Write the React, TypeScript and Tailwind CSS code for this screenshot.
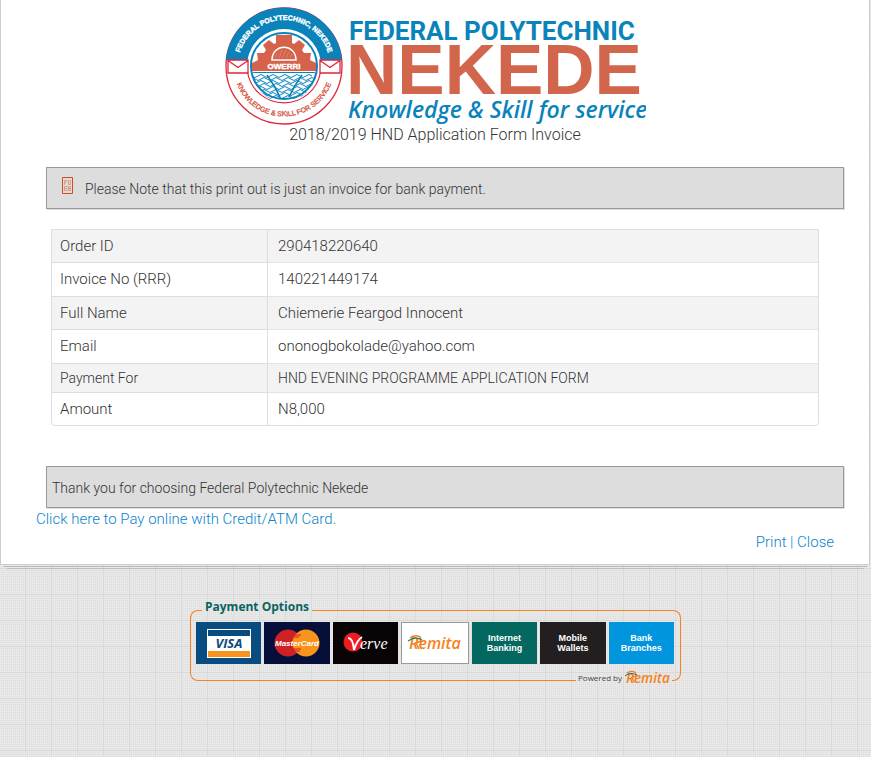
import React from "react";

const rows = [
  { label: "Order ID", value: "290418220640", cell: "h-[33px] text-[15px]" },
  { label: "Invoice No (RRR)", value: "140221449174", cell: "h-[34px] text-[15px]" },
  { label: "Full Name", value: "Chiemerie Feargod Innocent", cell: "h-[33px] text-[15px]" },
  { label: "Email", value: "ononogbokolade@yahoo.com", cell: "h-[34px] text-[15px]" },
  { label: "Payment For", value: "HND EVENING PROGRAMME APPLICATION FORM", cell: "h-[29px] text-[14px]" },
  { label: "Amount", value: "N8,000", cell: "h-[32px] text-[15px]" },
];

const waves = [69, 72, 75, 78, 81, 84, 87, 90];

function Crest() {
  return (
    <svg viewBox="0 0 118 118" className="h-[118px] w-[118px] shrink-0" role="img" aria-label="Federal Polytechnic Nekede crest">
      <defs>
        <path id="crest-top" d="M13 59a46 46 0 0 1 92 0" />
        <path id="crest-bottom" d="M8.500 59a50.500 50.500 0 0 0 101 0" />
        <clipPath id="crest-sea">
          <path d="M28 64h62a31 31 0 0 1-62 0z" />
        </clipPath>
      </defs>
      <circle cx="59" cy="59" r="58" fill="#fff" stroke="#e0243b" strokeWidth="1.3" />
      <path d="M.8 53A58.500 58.500 0 0 1 117.200 53H95.500A37 37 0 0 0 22.500 53z" fill="#0a83bb" />
      <path d="M22.500 65a37 37 0 0 0 73 0" fill="none" stroke="#e0243b" strokeWidth="1.2" />
      <circle cx="59" cy="59" r="33" fill="#fff" stroke="#0a83bb" strokeWidth="2" />
      <path d="M27 64V56L33 53 32 46H39L41 43 38 38 44 33 49 37 51 36V28H67V36L69 37 74 33 80 38 77 43 79 46H86L85 53 91 56V64Z" fill="#d5634b" />
      <path d="M47 53c0-17 24-17 24 0z" fill="none" stroke="#fff" strokeWidth="1.5" />
      <path d="M50 51l2-5m2 5l3-8m0 8l4-8m0 8l3-6m1 6l2-4" stroke="#e59583" strokeWidth="0.600" />
      <g clipPath="url(#crest-sea)" fill="none" stroke="#0a83bb" strokeWidth="1">
        <path d="M27 65.500h64" />
        <path d="M42 68q8 11 13 22M77 68q-8 11-13 22" strokeWidth="1.600" />
        {waves.map((y, i) => (
          <path key={y} d={i % 2 ? "M24 0q3-3 6 0t6 0 6 0 6 0 6 0 6 0 6 0 6 0 6 0 6 0 6 0" : "M21 0q3-3 6 0t6 0 6 0 6 0 6 0 6 0 6 0 6 0 6 0 6 0 6 0"} transform={`translate(0 ${y})`} />
        ))}
      </g>
      <text x="59" y="62" textAnchor="middle" className="font-['Liberation_Sans',sans-serif] text-[8px] font-bold" fill="#fff" stroke="#fff" strokeWidth="0.400">OWERRI</text>
      <g fill="#fff" stroke="#e0243b" strokeWidth="1.300">
        <path d="M3 53h20v13H3zM3 53.500l10 7 10-7M95 53h20v13H95zM95 53.500l10 7 10-7" />
      </g>
      <text className="font-['Liberation_Sans',sans-serif] text-[7px] font-bold" fill="#fff" stroke="#fff" strokeWidth="0.400">
        <textPath href="#crest-top" startOffset="50%" textAnchor="middle">FEDERAL POLYTECHNIC, NEKEDE</textPath>
      </text>
      <text className="font-['Liberation_Sans',sans-serif] text-[7px]" fill="#d5503d" stroke="#d5503d" strokeWidth="0.300">
        <textPath href="#crest-bottom" startOffset="50%" textAnchor="middle">KNOWLEDGE &amp; SKILL FOR SERVICE</textPath>
      </text>
    </svg>
  );
}

function Logo() {
  return (
    <div className="flex items-start gap-[3px]">
      <Crest />
      <svg viewBox="0 0 300 118" className="h-[118px] w-[300px]" role="img" aria-label="Federal Polytechnic Nekede">
        <text x="3" y="33" className="font-[Roboto,sans-serif] text-[26px] font-bold" fill="#0a83bb">FEDERAL POLYTECHNIC</text>
        <text x="0" y="87" className="font-['Liberation_Sans',sans-serif] text-[71px] font-bold" fill="#d2664c">NEKEDE</text>
        <text x="2" y="111" className="font-['Open_Sans',sans-serif] text-[23px] font-semibold italic" fill="#0a83bb">Knowledge &amp; Skill for service</text>
      </svg>
    </div>
  );
}

function Remita({ className }: { className: string }) {
  return (
    <svg viewBox="0 0 56 20" className={className} role="img" aria-label="Remita">
      <text x="2" y="16" className="font-['Open_Sans',sans-serif] text-[16px] font-semibold italic" fill="#f58220">Remita</text>
      <path d="M3 5q5-4 10-1l1 4-5 2 3 6" fill="none" stroke="#f58220" strokeWidth="1.500" />
      <path d="M1 8q7-5 14-1" fill="none" stroke="#22807b" strokeWidth="1.200" />
    </svg>
  );
}

const tile = "flex h-[42px] min-w-0 flex-1 items-center justify-center";
const words = "text-center font-['Liberation_Sans',sans-serif] text-[9px] leading-[10px] font-bold text-white";

function PaymentOptions() {
  return (
    <section className="mx-auto mt-[29px] w-full max-w-[491px]">
      <div className="flex items-end">
        <div className="h-[10px] w-[12px] rounded-tl-[8px] border-t border-l border-[#f58220]" />
        <h2 className="px-[3px] pb-1 font-['Open_Sans',sans-serif] text-[12px] leading-[18px] font-bold text-[#08645e]">Payment Options</h2>
        <div className="h-[10px] flex-1 rounded-tr-[8px] border-t border-r border-[#f58220]" />
      </div>
      <div className="flex gap-[3px] border-x border-[#f58220] pt-[2px] pr-[6px] pl-[5px]">
        <div className={`${tile} bg-[#084c80]`}>
          <svg viewBox="0 0 44 29" className="h-[29px] w-[44px]" role="img" aria-label="Visa">
            <path d="M0 0h44v29H0z" fill="#fff" />
            <path d="M1 1h42v6H1z" fill="#084c80" />
            <path d="M1 22h42v6H1z" fill="#f7941d" />
            <text x="22" y="19" textAnchor="middle" className="font-['Open_Sans',sans-serif] text-[13px] font-bold italic" fill="#084c80">VISA</text>
          </svg>
        </div>
        <div className={`${tile} bg-[#060f39]`}>
          <svg viewBox="0 0 48 28" className="h-[28px] w-[48px]" role="img" aria-label="MasterCard">
            <circle cx="15" cy="14" r="13.500" fill="#cf2026" />
            <circle cx="33" cy="14" r="13.500" fill="#f7941d" />
            <path d="M20 6h8M19 8h7M20 20h8M20 22h7" stroke="#cf2026" strokeWidth="1" />
            <text x="24" y="17" textAnchor="middle" className="font-['Liberation_Sans',sans-serif] text-[8px] font-bold italic" fill="#fff">MasterCard</text>
          </svg>
        </div>
        <div className={`${tile} bg-[#080304]`}>
          <svg viewBox="0 0 46 24" className="h-[24px] w-[46px]" role="img" aria-label="Verve">
            <circle cx="10" cy="11" r="9.500" fill="#ed1c24" />
            <path d="M5 7q5 0 6 12 3-10 8-13" fill="none" stroke="#fff" strokeWidth="2" />
            <text x="17" y="18" className="font-['Liberation_Serif',serif] text-[16px] italic" fill="#fff">erve</text>
          </svg>
        </div>
        <div className={`${tile} border border-[#999] bg-white`}><Remita className="h-[20px] w-[56px]" /></div>
        <div className={`${tile} bg-[#046760]`}><p className={words}>Internet<br />Banking</p></div>
        <div className={`${tile} bg-[#231f20]`}><p className={words}>Mobile<br />Wallets</p></div>
        <div className={`${tile} bg-[#0095dc]`}><p className={words}>Bank<br />Branches</p></div>
      </div>
      <div className="flex items-start">
        <div className="h-[17px] flex-1 rounded-bl-[8px] border-b border-l border-[#f58220]" />
        <div className="flex h-[22px] items-end gap-[2px] pl-[2px]">
          <span className="font-['Open_Sans',sans-serif] text-[8px] leading-[16px] font-medium text-[#444]">Powered by</span>
          <Remita className="h-[17px] w-[48px]" />
        </div>
        <div className="h-[17px] w-[9px] rounded-br-[8px] border-r border-b border-[#f58220]" />
      </div>
    </section>
  );
}

export default function App() {
  return (
    <div className="min-h-screen bg-[#e8e8e8] bg-[linear-gradient(to_right,#d9d9d9_1px,transparent_1px),linear-gradient(to_bottom,#d9d9d9_1px,transparent_1px),conic-gradient(at_1px_1px,transparent_75%,#dcdcdc_0)] bg-[size:26px_26px,26px_26px,2px_2px] bg-[position:25px_0px,0px_22px,1px_0px] font-[Roboto,sans-serif] font-light text-[#333]">
      <main className="mr-px border-x border-b border-[#ccc] bg-white pb-[11px]">
        <header className="flex flex-col items-center pt-[7px]">
          <Logo />
          <h1 className="pt-px text-[16px] leading-[18px]">2018/2019 HND Application Form Invoice</h1>
        </header>
        <div className="mt-[23px] mr-[25px] ml-[45px] flex h-[42px] items-center gap-[12px] border border-[#999] bg-[#ddd] pl-[15px] text-[14px] shadow-[1px_1px_0_#ddd]">
          <svg viewBox="0 0 11 17" className="mb-[6px] h-[17px] w-[11px]" aria-hidden="true">
            <path d="M.5.500h10v16H.5z" fill="none" stroke="#ce4d20" />
            <path d="M2.500 8V3.500h3M2.500 5.500h2M7.500 3.500h1v4h-2v-4zM5.500 9.500h-3v4h3M2.500 11.500h3M6.500 9.500h2v4h-2zM6.500 11.500h2" fill="none" stroke="#df987e" />
          </svg>
          <p className="pt-[2px]">Please Note that this print out is just an invoice for bank payment.</p>
        </div>
        <table className="mt-5 ml-[50px] w-[calc(100%_-_100px)] border-separate border-spacing-0 rounded-b-[4px] border border-[#ddd]">
          <tbody>
            {rows.map((row) => (
              <tr key={row.label} className="group odd:bg-[#f3f3f3]">
                <th scope="row" className={`${row.cell} w-[216px] border-r border-b border-[#ddd] py-0 pr-2 pl-2 text-left font-light group-last:border-b-0`}>{row.label}</th>
                <td className={`${row.cell} border-b border-[#e4e4e4] py-0 pl-[10px] group-last:border-b-0`}>{row.value}</td>
              </tr>
            ))}
          </tbody>
        </table>
        <div className="mt-10 mr-[25px] ml-[45px] flex h-[42px] items-center border border-[#999] bg-[#ddd] pl-[5px] text-[14px] shadow-[1px_1px_0_#ddd]">
          <p className="pt-[2px]">Thank you for choosing Federal Polytechnic Nekede</p>
        </div>
        <div className="pl-[35px] text-[15px] leading-[23px] text-[#0c83cc]">
          <a href="#pay">Click here to Pay online with Credit/ATM Card.</a>
        </div>
        <nav className="pr-[35px] text-right text-[15px] leading-[22px] text-[#0c83cc]">
          <a href="#print">Print</a> | <a href="#close">Close</a>
        </nav>
      </main>
      <div className="mx-1 mt-px h-px bg-[#bdb6b6]" />
      <div className="mx-[7px] mt-px h-px bg-[#c2bbbb]" />
      <PaymentOptions />
    </div>
  );
}
